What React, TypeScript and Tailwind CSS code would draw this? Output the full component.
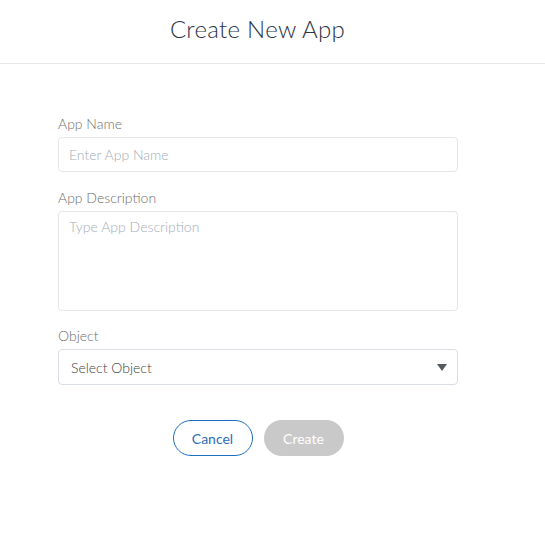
const font = {fontFamily: 'Lato, "Open Sans", sans-serif'}

const Label = ({children}: {children: React.ReactNode}) => (
  <label className="block text-[14px] font-light text-[#706e6b] leading-[20px] mb-[3px]">{children}</label>
)

export default function App() {
  return (
    <div className="w-[545px] h-[541px] bg-white" style={font}>
      <header className="h-[64px] border-b border-[#e8e8e8] flex items-center justify-center">
        <h1 className="text-[24px] font-light text-[#2b3445] tracking-[0.3px] -mt-[6px] ml-[-30px]">Create New App</h1>
      </header>
      <form className="w-[400px] ml-[58px] pt-[50px]">
        <Label>App Name</Label>
        <input
          className="w-full h-[35px] px-[10px] rounded-[4px] border border-[#e4e6ea] text-[14px] font-light placeholder:text-[#a5acb8] outline-none"
          placeholder="Enter App Name"
        />
        <div className="mt-[16px]">
          <Label>App Description</Label>
          <textarea
            className="block w-full h-[100px] px-[10px] py-[4px] rounded-[4px] border border-[#e4e6ea] text-[14px] font-light placeholder:text-[#a5acb8] outline-none resize-none"
            placeholder="Type App Description"
          />
        </div>
        <div className="mt-[15px]">
          <Label>Object</Label>
          <div className="h-[36px] rounded-[4px] border border-[#d8dde6] flex items-center justify-between pl-[12px] pr-[10px]">
            <span className="text-[14px] font-light text-[#3e3e3c]">Select Object</span>
            <svg width="10" height="7" viewBox="0 0 10 7">
              <path d="M0 0 H10 L5 7 Z" fill="#54585f" />
            </svg>
          </div>
        </div>
        <div className="flex justify-center gap-[11px] mt-[35px]">
          <button
            type="button"
            className="w-[80px] h-[36px] rounded-full border border-[#1b6fc0] text-[#2d6db5] text-[14px] bg-white"
          >
            Cancel
          </button>
          <button type="button" className="w-[80px] h-[36px] rounded-full bg-[#c9c9c9] text-white text-[14px]">
            Create
          </button>
        </div>
      </form>
    </div>
  )
}
